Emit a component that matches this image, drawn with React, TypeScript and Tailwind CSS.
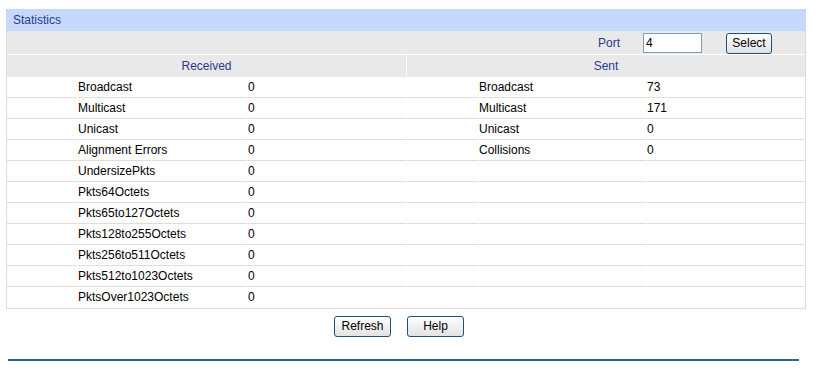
import React from "react";

const received: [string, string][] = [
  ["Broadcast", "0"],
  ["Multicast", "0"],
  ["Unicast", "0"],
  ["Alignment Errors", "0"],
  ["UndersizePkts", "0"],
  ["Pkts64Octets", "0"],
  ["Pkts65to127Octets", "0"],
  ["Pkts128to255Octets", "0"],
  ["Pkts256to511Octets", "0"],
  ["Pkts512to1023Octets", "0"],
  ["PktsOver1023Octets", "0"],
];

const sent: [string, string][] = [
  ["Broadcast", "73"],
  ["Multicast", "171"],
  ["Unicast", "0"],
  ["Collisions", "0"],
];

function Btn({ label, w }: { label: string; w: string }) {
  return (
    <button
      className={`${w} h-[21px] rounded-[3px] border border-[#1d4f80] bg-gradient-to-b from-[#ffffff] to-[#e2e2e2] text-[12px] leading-[19px] text-black`}
    >
      {label}
    </button>
  );
}

export default function App() {
  return (
    <div
      className="w-[828px] h-[384px] bg-white text-[12px]"
      style={{ fontFamily: '"Liberation Sans", Arial, sans-serif' }}
    >
      <div className="ml-[6px] pt-[9px] w-[800px]">
        <div className="h-[22px] bg-[#c6d9fc] pl-[7px] leading-[22px] text-[#2a3a8c]">
          Statistics
        </div>
        <div className="border-x border-b border-[#dcdcdc]">
          <div className="h-[23px] bg-[#e9e9e9] flex items-center">
            <span className="ml-[591px] text-[#2a3a8c] leading-[20px]">Port</span>
            <input
              defaultValue="4"
              className="ml-[23px] w-[59px] h-[20px] border border-[#7f9db9] bg-white px-[2px] text-[12px] text-black outline-none leading-[18px]"
            />
            <div className="ml-[24px] mt-[1px]">
              <Btn label="Select" w="w-[46px]" />
            </div>
          </div>
          <div className="mt-px flex gap-px h-[22px]">
            <div className="w-[399px] bg-[#e9e9e9] text-center leading-[22px] text-[#2a3a8c]">
              Received
            </div>
            <div className="flex-1 bg-[#e9e9e9] text-center leading-[22px] text-[#2a3a8c]">
              Sent
            </div>
          </div>
          {received.map((r, i) => {
            const s = sent[i];
            const last = i === received.length - 1;
            const cell = last ? "h-[21px]" : "h-[21px] border-b border-[#dedede]";
            return (
              <div key={i} className="flex gap-px text-black leading-[20px]">
                <div className={`w-[70px] ${cell}`} />
                <div className={`w-[169px] ${cell}`}>{r[0]}</div>
                <div className={`w-[158px] ${cell}`}>{r[1]}</div>
                <div className={`w-[71px] ${cell}`} />
                <div className={`w-[167px] ${cell}`}>{s ? s[0] : ""}</div>
                <div className={`flex-1 ${cell}`}>{s ? s[1] : ""}</div>
              </div>
            );
          })}
        </div>
        <div className="mt-[7px] flex justify-center gap-[16px] pr-[14px]">
          <Btn label="Refresh" w="w-[57px]" />
          <Btn label="Help" w="w-[57px]" />
        </div>
        <div className="mt-[22px] ml-[2px] w-[791px] h-[2px] bg-[#24679a]" />
      </div>
    </div>
  );
}
